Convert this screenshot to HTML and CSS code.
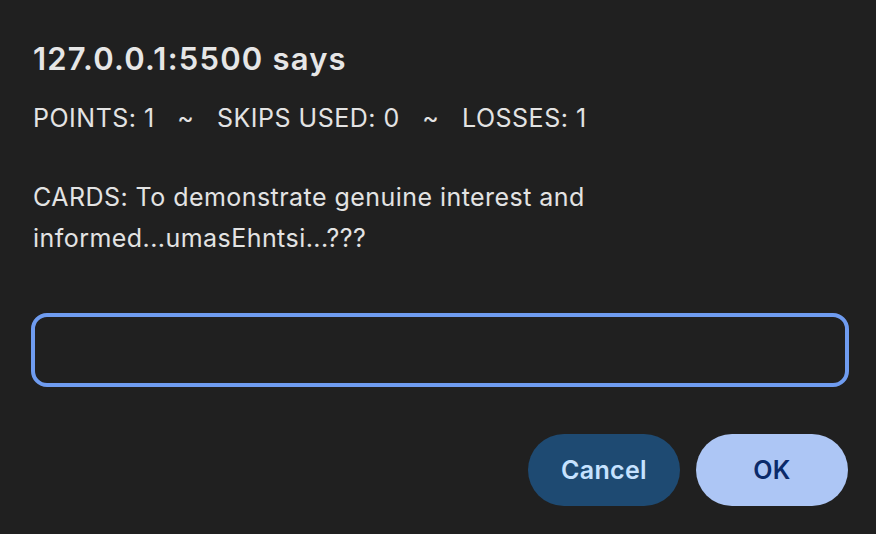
FILE: index.html
```html
<!DOCTYPE html>
<html>
<head>
<meta charset="utf-8">
<link rel="stylesheet" href="styles.css">
</head>
<body>
<div class="dialog">
  <h1 class="title">127.0.0.1:5500 says</h1>
  <p class="stats">POINTS: 1   ~   SKIPS USED: 0   ~   LOSSES: 1</p>
  <p class="message">CARDS: To demonstrate genuine interest and<br>informed...umasEhntsi...???</p>
  <div class="field"></div>
  <div class="actions">
    <button class="btn cancel">Cancel</button>
    <button class="btn ok">OK</button>
  </div>
</div>
</body>
</html>
```
FILE: styles.css
```css
html, body {
  margin: 0;
  padding: 0;
  background: #202020;
  width: 876px;
  height: 534px;
  overflow: hidden;
}
.dialog {
  display: flex;
  flex-direction: column;
  padding: 0 27px 0 33px;
  font-family: Inter, "Noto Sans", sans-serif;
  color: #e3e3e3;
}
.title {
  margin: 37px 0 0 0;
  font-size: 31px;
  font-weight: 600;
  letter-spacing: 1.2px;
  line-height: 44px;
  color: #e6e6e6;
}
.stats {
  margin: 17px 0 0 0;
  font-size: 25px;
  letter-spacing: 0.5px;
  line-height: 40px;
  white-space: pre;
}
.message {
  margin: 39px 0 0 0;
  font-size: 25px;
  letter-spacing: 0.45px;
  line-height: 41px;
}
.field {
  margin: 54px 0 0 -2px;
  height: 66px;
  border: 4px solid #6f9cf0;
  border-radius: 16px;
}
.actions {
  display: flex;
  justify-content: flex-end;
  gap: 16px;
  margin-top: 47px;
  margin-right: 1px;
}
.btn {
  width: 152px;
  height: 72px;
  border: none;
  border-radius: 36px;
  font-family: Inter, "Noto Sans", sans-serif;
  font-size: 25px;
  font-weight: 600;
  letter-spacing: 0.3px;
}
.cancel {
  background: #1e4a72;
  color: #c6e2ff;
}
.ok {
  background: #adc6f5;
  color: #0b2a6a;
}
```
